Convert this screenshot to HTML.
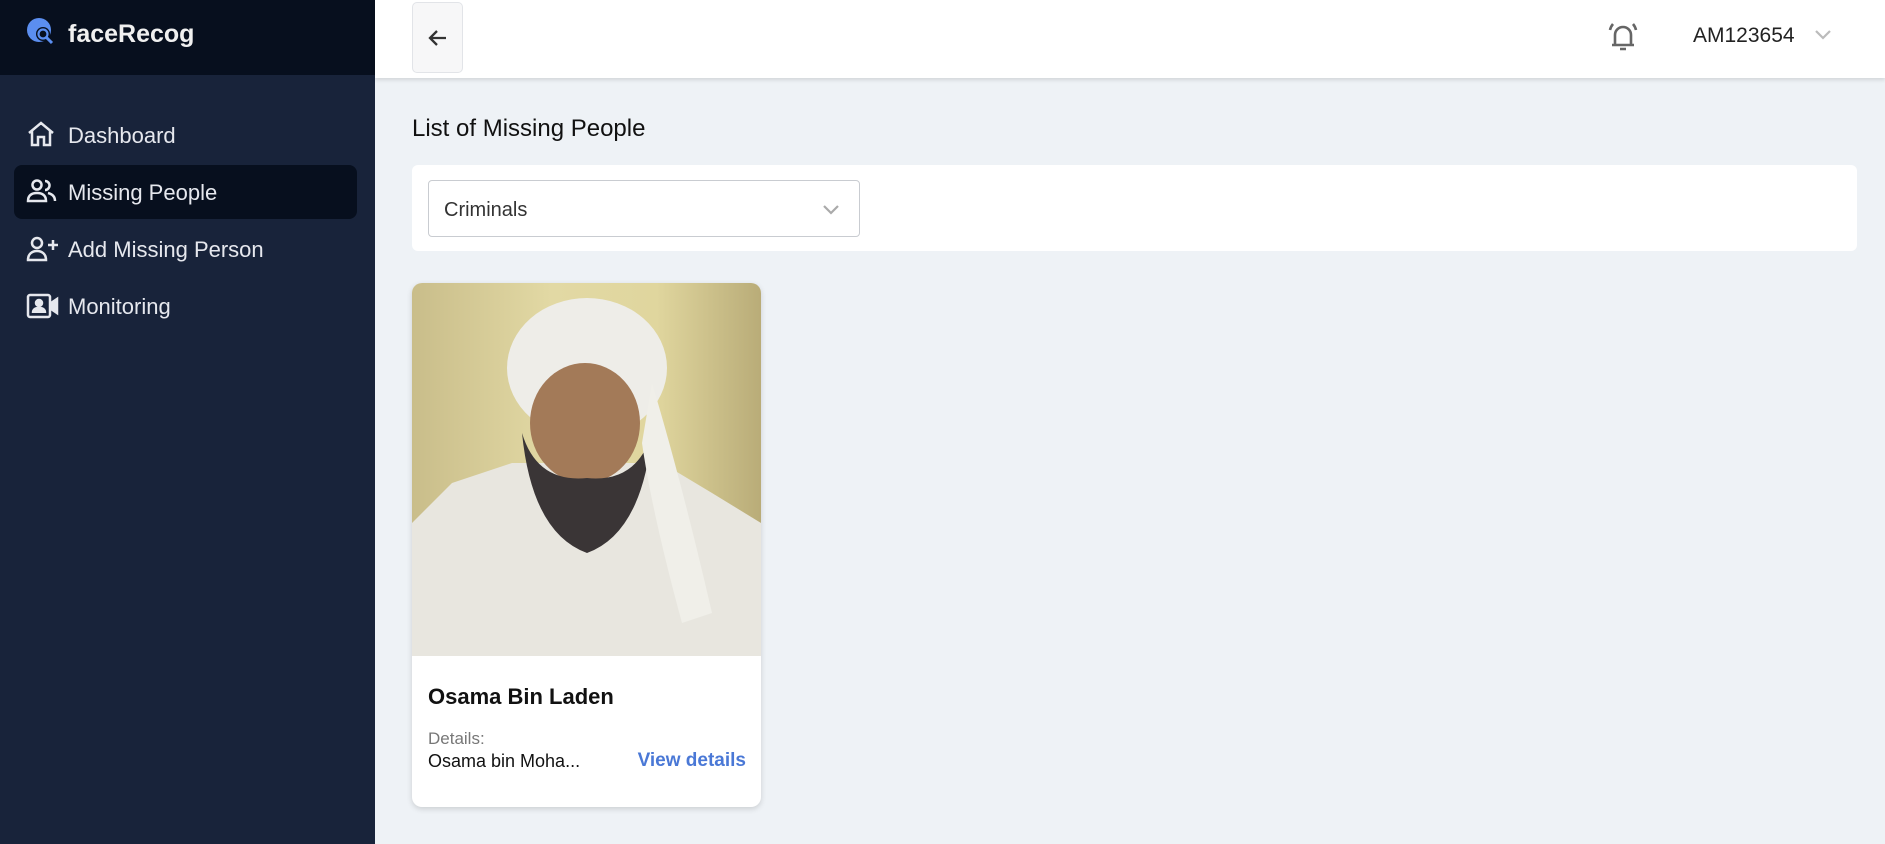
<!DOCTYPE html>
<html><head><meta charset="utf-8"><style>
*{box-sizing:border-box;margin:0;padding:0}
body{width:1885px;height:844px;overflow:hidden;background:#eef2f6;font-family:"Liberation Sans",sans-serif;position:relative}
.side{position:absolute;left:0;top:0;width:375px;height:844px;background:#18233a}
.logo{position:absolute;left:0;top:0;width:375px;height:75px;background:#070f1e;color:#fff}
.logo span{position:absolute;left:68px;top:20px;font-size:25px;font-weight:bold;color:#f0f0f0}
.nav{position:absolute;left:68px;font-size:22px;color:#e6e8ee}
.ico{position:absolute;left:26px}
.act{position:absolute;left:14px;top:165px;width:343px;height:54px;background:#070f1e;border-radius:8px}
.top{position:absolute;left:375px;top:0;width:1510px;height:78px;background:#fff;box-shadow:0 2px 4px rgba(0,0,0,.12)}
.back{position:absolute;left:412px;top:2px;width:51px;height:71px;border:1px solid #e2e4e8;border-radius:5px;background:#f7f7f8}
.title{position:absolute;left:412px;top:115px;font-size:24px;color:#111}
.filter{position:absolute;left:412px;top:165px;width:1445px;height:86px;background:#fff;border-radius:6px}
.sel{position:absolute;left:16px;top:15px;width:432px;height:57px;border:1px solid #c9ccd1;border-radius:4px;font-size:20px;color:#333;padding:18px 15px}
.card{position:absolute;left:412px;top:283px;width:349px;height:524px;background:#fff;border-radius:10px;overflow:hidden;box-shadow:0 2px 6px rgba(0,0,0,.15)}
.img{position:absolute;left:0;top:0;width:349px;height:373px;background:linear-gradient(90deg,#c9bd8a,#e2d9a4 40%,#e0d69e 70%,#b9ac78)}
</style></head><body>
<div class="side">
 <div class="logo">
  <svg style="position:absolute;left:26px;top:17px" width="30" height="30" viewBox="0 0 30 30"><circle cx="13" cy="13" r="12" fill="#5b8ef0"/><circle cx="17" cy="17" r="7" fill="#070f1e"/><circle cx="17" cy="17" r="4.5" fill="none" stroke="#5b8ef0" stroke-width="2.2"/><path d="M20 20l6 6" stroke="#5b8ef0" stroke-width="3"/></svg>
  <span>faceRecog</span>
 </div>
 <div class="act"></div>
 <svg class="ico" style="top:120px" width="30" height="28" viewBox="0 0 30 28" fill="none" stroke="#e6e8ee" stroke-width="2.5"><path d="M3 13L15 3l12 10M6 11v14h6v-8h6v8h6V11"/></svg>
 <div class="nav" style="top:123px">Dashboard</div>
 <svg class="ico" style="top:178px" width="32" height="26" viewBox="0 0 32 26" fill="none" stroke="#e6e8ee" stroke-width="2.5"><circle cx="11" cy="7" r="4.5"/><path d="M2 23c0-6 4-8 9-8s9 2 9 8z"/><path d="M19 3a4.5 4.5 0 010 9M22 15c4 1 7 3 7 8"/></svg>
 <div class="nav" style="top:180px">Missing People</div>
 <svg class="ico" style="top:235px" width="34" height="28" viewBox="0 0 34 28" fill="none" stroke="#e6e8ee" stroke-width="2.5"><circle cx="11" cy="8" r="5"/><path d="M2 25c0-6 4-9 9-9s9 3 9 9z"/><path d="M27 5v10M22 10h10"/></svg>
 <div class="nav" style="top:237px">Add Missing Person</div>
 <svg class="ico" style="top:292px" width="34" height="28" viewBox="0 0 34 28" fill="none" stroke="#e6e8ee" stroke-width="2.5"><rect x="2" y="3" width="22" height="22" rx="2"/><circle cx="13" cy="11" r="3" fill="#e6e8ee"/><path d="M7 21c0-4 3-5 6-5s6 1 6 5" fill="#e6e8ee"/><path d="M25 11l6-4v14l-6-4z" fill="#e6e8ee"/></svg>
 <div class="nav" style="top:294px">Monitoring</div>
</div>
<div class="top">
 <svg style="position:absolute;left:1230px;top:18px" width="36" height="36" viewBox="0 0 36 36" fill="none" stroke="#666" stroke-width="2.6"><path d="M10 27V17a8 8 0 0116 0v10M7 27h22M15 31h6M5 12a14 14 0 013-6M31 12a14 14 0 00-3-6"/></svg>
 <div style="position:absolute;left:1318px;top:24px;font-size:21px;color:#222">AM123654</div>
 <svg style="position:absolute;left:1438px;top:28px" width="20" height="14" viewBox="0 0 20 14" fill="none" stroke="#bbb" stroke-width="2.2"><path d="M3 3l7 7 7-7"/></svg>
</div>
<div class="back"><svg style="position:absolute;left:13px;top:23px" width="24" height="24" viewBox="0 0 24 24" fill="none" stroke="#333" stroke-width="2.3"><path d="M20 12H4M11 5l-7 7 7 7"/></svg></div>
<div class="title">List of Missing People</div>
<div class="filter"><div class="sel">Criminals<svg style="position:absolute;right:18px;top:22px" width="20" height="14" viewBox="0 0 20 14" fill="none" stroke="#aaa" stroke-width="2.2"><path d="M3 3l7 7 7-7"/></svg></div></div>
<div class="card">
 <div class="img">
  <svg width="349" height="373" viewBox="0 0 349 373">
   <path d="M0 240 L40 200 L100 180 L250 180 L300 210 L349 240 V373 H0Z" fill="#e8e6df"/>
   <ellipse cx="175" cy="85" rx="80" ry="70" fill="#eeede8"/>
   <ellipse cx="173" cy="140" rx="55" ry="60" fill="#a37a58"/>
   <path d="M110 150 Q120 250 175 270 Q230 250 240 150 Q225 200 175 195 Q125 200 110 150Z" fill="#3a3536"/>
   <path d="M240 100 Q270 200 300 330 L270 340 Q240 230 230 160Z" fill="#f0efe9"/>
  </svg>
 </div>
 <div style="position:absolute;left:16px;top:401px;font-size:22px;font-weight:bold;color:#111">Osama Bin Laden</div>
 <div style="position:absolute;left:16px;top:446px;font-size:17px;color:#777">Details:</div>
 <div style="position:absolute;left:16px;top:468px;font-size:18px;color:#111">Osama bin Moha...</div>
 <div style="position:absolute;right:15px;top:467px;font-size:19px;font-weight:bold;color:#4a78d6">View details</div>
</div>
</body></html>
